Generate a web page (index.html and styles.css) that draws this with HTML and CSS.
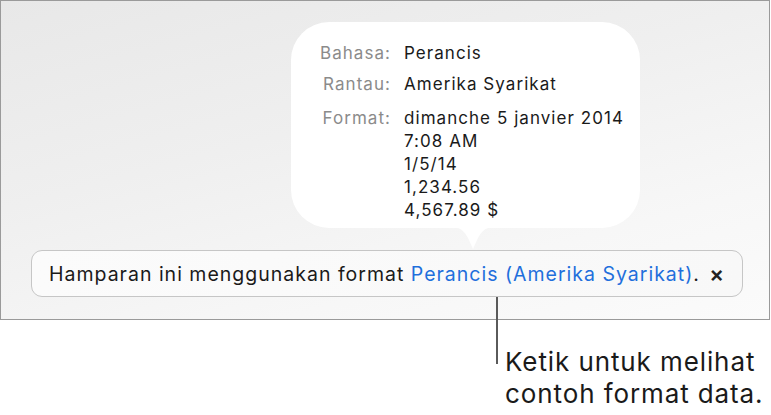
FILE: index.html
```html
<!DOCTYPE html>
<html>
<head>
<meta charset="utf-8">
<link rel="stylesheet" href="styles.css">
</head>
<body>
<div class="panel">
  <div class="bubble">
    <div class="rows">
      <div class="label">Bahasa:</div><div class="value">Perancis</div>
      <div class="label">Rantau:</div><div class="value">Amerika Syarikat</div>
      <div class="label fmt">Format:</div>
      <div class="value fmt">dimanche 5 janvier 2014<br>7:08 AM<br>1/5/14<br>1,234.56<br>4,567.89 $</div>
    </div>
    <svg class="pointer" width="42" height="23" viewBox="0 0 42 23"><path d="M0 0 C9 0 13 5 16.5 12 L21 22 L25.5 12 C29 5 33 0 42 0 Z" fill="#ffffff"/></svg>
  </div>
  <div class="bar">
    <span class="msg">Hamparan ini menggunakan format <span class="link">Perancis (Amerika Syarikat)</span>.</span>
    <span class="close">×</span>
  </div>
  <div class="callout-line"></div>
</div>
<div class="caption">Ketik untuk melihat<br>contoh format data.</div>
</body>
</html>
```
FILE: styles.css
```css
html, body {
  margin: 0;
  padding: 0;
  background: #ffffff;
  font-family: Inter, "Noto Sans", sans-serif;
}
.panel {
  position: relative;
  width: 770px;
  height: 320px;
  box-sizing: border-box;
  border: 1px solid #9a9a9a;
  background: linear-gradient(165deg, #e8e8e8 0%, #efefef 40%, #f7f7f7 75%, #fbfbfb 100%);
  padding-top: 21px;
}
.bubble {
  position: relative;
  margin-left: 290px;
  width: 349px;
  height: 206px;
  background: #ffffff;
  border-radius: 38px;
  box-sizing: border-box;
  padding: 20px 0 0 28px;
}
.rows {
  display: grid;
  grid-template-columns: 72px auto;
  column-gap: 13px;
  row-gap: 8px;
  font-size: 17px;
  letter-spacing: 1.05px;
  line-height: 23px;
  color: #1a1a1a;
  white-space: nowrap;
}
.label {
  text-align: right;
  color: #8b8b8b;
}
.fmt { margin-top: 3px; }
.pointer {
  position: absolute;
  left: 161px;
  top: 205px;
}
.bar {
  margin: 22px 0 0 30px;
  width: 712px;
  height: 47px;
  box-sizing: border-box;
  border: 1px solid #c6c6c6;
  border-radius: 11px;
  background: linear-gradient(90deg, #fbfbfb, #f8f8f8);
  display: flex;
  align-items: center;
  padding: 0 18px 0 17px;
  font-size: 19.5px;
  letter-spacing: 1px;
  color: #1a1a1a;
  white-space: nowrap;
}
.msg { flex: 1; }
.link { color: #1f6fdc; }
.close {
  font-size: 22px;
  font-weight: 600;
  color: #222;
  letter-spacing: 0;
}
.callout-line {
  position: absolute;
  left: 495px;
  top: 296px;
  width: 2px;
  height: 67px;
  background: #5a5a5a;
}
.caption {
  padding: 26px 0 0 505px;
  font-size: 26px;
  letter-spacing: 0.9px;
  line-height: 32px;
  color: #1a1a1a;
  white-space: nowrap;
}
```
